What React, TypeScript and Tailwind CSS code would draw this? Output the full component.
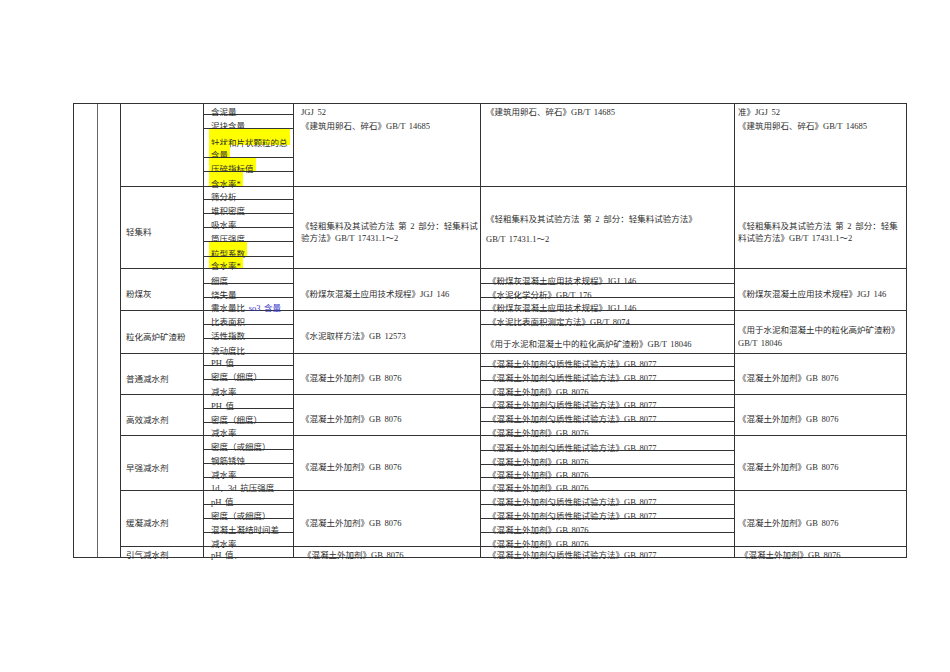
import type { ReactNode } from 'react'
import clsx from 'clsx'

type Sub = { h?: string; t: ReactNode; hl?: boolean; noLine?: boolean; mid?: boolean }
type Block =
  | { kind: 'top'; lines: string[] }
  | { kind: 'mid'; lines: string[] }
  | { kind: 'custom'; cls: string; lines: string[] }
  | { kind: 'rows'; rows: Sub[] }

type Group = { h: string; label: string; c4: Sub[]; c5: Block; c6: Block; c7: Block }

const GB8076 = '《混凝土外加剂》GB 8076'
const GB8077 = '《混凝土外加剂匀质性能试验方法》GB 8077'

const groups: Group[] = [
  {
    h: 'h-[83px]',
    label: '',
    c4: [
      { h: 'h-[11px]', t: '含泥量' },
      { h: 'h-[14px]', t: '泥块含量' },
      { h: 'h-[16px]', t: '针状和片状颗粒的总', hl: true, noLine: true },
      { h: 'h-[13px]', t: '含量', hl: true },
      { h: 'h-[14px]', t: '压碎指标值', hl: true },
      { t: '含水率*', hl: true },
    ],
    c5: { kind: 'top', lines: ['JGJ 52', '《建筑用卵石、碎石》GB/T 14685'] },
    c6: { kind: 'top', lines: ['《建筑用卵石、碎石》GB/T 14685'] },
    c7: { kind: 'top', lines: ['准》JGJ 52', '《建筑用卵石、碎石》GB/T 14685'] },
  },
  {
    h: 'h-[82px]',
    label: '轻集料',
    c4: [
      { h: 'h-[13px]', t: '筛分析' },
      { h: 'h-[14px]', t: '堆积密度' },
      { h: 'h-[14px]', t: '吸水率' },
      { h: 'h-[14px]', t: '筒压强度' },
      { h: 'h-[15px]', t: '粒型系数', hl: true },
      { t: '含水率*', hl: true },
    ],
    c5: { kind: 'mid', lines: ['《轻粗集料及其试验方法 第 2 部分：轻集料试', '验方法》GB/T 17431.1～2'] },
    c6: {
      kind: 'custom',
      cls: 'pt-[22px] leading-[20px]',
      lines: ['《轻粗集料及其试验方法 第 2 部分：轻集料试验方法》', 'GB/T 17431.1～2'],
    },
    c7: { kind: 'mid', lines: ['《轻粗集料及其试验方法 第 2 部分：轻集', '料试验方法》GB/T 17431.1～2'] },
  },
  {
    h: 'h-[42px]',
    label: '粉煤灰',
    c4: [
      { h: 'h-[15px]', t: '细度' },
      { h: 'h-[14px]', t: '烧失量' },
      {
        t: (
          <>
            需水量比 <span className="text-[#3737c8]">so3 含量</span>
          </>
        ),
      },
    ],
    c5: { kind: 'mid', lines: ['《粉煤灰混凝土应用技术规程》JGJ 146'] },
    c6: {
      kind: 'rows',
      rows: [
        { h: 'h-[15px]', t: '《粉煤灰混凝土应用技术规程》JGJ 146' },
        { h: 'h-[14px]', t: '《水泥化学分析》GB/T 176' },
        { t: '《粉煤灰混凝土应用技术规程》JGJ 146' },
      ],
    },
    c7: { kind: 'mid', lines: ['《粉煤灰混凝土应用技术规程》JGJ 146'] },
  },
  {
    h: 'h-[43px]',
    label: '粒化高炉矿渣粉',
    c4: [
      { h: 'h-[14px]', t: '比表面积' },
      { h: 'h-[14px]', t: '活性指数' },
      { t: '流动度比' },
    ],
    c5: { kind: 'mid', lines: ['《水泥取样方法》GB 12573'] },
    c6: {
      kind: 'rows',
      rows: [
        { h: 'h-[14px]', t: '《水泥比表面积测定方法》GB/T 8074' },
        { t: '《用于水泥和混凝土中的粒化高炉矿渣粉》GB/T 18046', mid: true },
      ],
    },
    c7: { kind: 'mid', lines: ['《用于水泥和混凝土中的粒化高炉矿渣粉》', 'GB/T 18046'] },
  },
  {
    h: 'h-[41px]',
    label: '普通减水剂',
    c4: [
      { h: 'h-[12px]', t: 'PH 值' },
      { h: 'h-[14px]', t: '密度（细度）' },
      { t: '减水率' },
    ],
    c5: { kind: 'mid', lines: [GB8076] },
    c6: {
      kind: 'rows',
      rows: [
        { h: 'h-[13px]', t: GB8077 },
        { h: 'h-[14px]', t: GB8077 },
        { t: GB8076 },
      ],
    },
    c7: { kind: 'mid', lines: [GB8076] },
  },
  {
    h: 'h-[41px]',
    label: '高效减水剂',
    c4: [
      { h: 'h-[14px]', t: 'PH 值' },
      { h: 'h-[14px]', t: '密度（细度）' },
      { t: '减水率' },
    ],
    c5: { kind: 'mid', lines: [GB8076] },
    c6: {
      kind: 'rows',
      rows: [
        { h: 'h-[13px]', t: GB8077 },
        { h: 'h-[14px]', t: GB8077 },
        { t: GB8076 },
      ],
    },
    c7: { kind: 'mid', lines: [GB8076] },
  },
  {
    h: 'h-[55px]',
    label: '早强减水剂',
    c4: [
      { h: 'h-[14px]', t: '密度（或细度）' },
      { h: 'h-[14px]', t: '钢筋锈蚀' },
      { h: 'h-[14px]', t: '减水率' },
      { t: '1d、3d 抗压强度' },
    ],
    c5: { kind: 'mid', lines: [GB8076] },
    c6: {
      kind: 'rows',
      rows: [
        { h: 'h-[15px]', t: GB8077 },
        { h: 'h-[14px]', t: GB8076 },
        { h: 'h-[13px]', t: GB8076 },
        { t: GB8076 },
      ],
    },
    c7: { kind: 'mid', lines: [GB8076] },
  },
  {
    h: 'h-[56px]',
    label: '缓凝减水剂',
    c4: [
      { h: 'h-[14px]', t: 'pH 值' },
      { h: 'h-[14px]', t: '密度（或细度）' },
      { h: 'h-[14px]', t: '混凝土凝结时间差' },
      { t: '减水率' },
    ],
    c5: { kind: 'mid', lines: [GB8076] },
    c6: {
      kind: 'rows',
      rows: [
        { h: 'h-[14px]', t: GB8077 },
        { h: 'h-[14px]', t: GB8077 },
        { h: 'h-[14px]', t: GB8076 },
        { t: GB8076 },
      ],
    },
    c7: { kind: 'mid', lines: [GB8076] },
  },
  {
    h: 'h-[10px]',
    label: '引气减水剂',
    c4: [{ t: 'pH 值、' }],
    c5: { kind: 'rows', rows: [{ t: GB8076 }] },
    c6: { kind: 'rows', rows: [{ t: GB8077 }] },
    c7: { kind: 'rows', rows: [{ t: GB8076 }] },
  },
]

function SubRows({ rows, pad }: { rows: Sub[]; pad: string }) {
  return (
    <div className="flex h-full flex-col">
      {rows.map((r, i) => {
        const line = !r.noLine && i < rows.length - 1
        if (r.mid) {
          return (
            <div key={i} className={clsx('flex min-h-0 flex-1 items-center pt-[9px]', pad)}>
              <span className="leading-[14px] whitespace-nowrap">{r.t}</span>
            </div>
          )
        }
        return (
          <div
            key={i}
            className={clsx('flex items-end', r.h ?? 'min-h-0 flex-1', line && 'border-b border-[#333]', pad)}
          >
            {r.hl ? (
              <span className="flex h-full items-end bg-[#ffff00] px-[2px]">
                <span className="-mb-[5px] leading-[14px] whitespace-nowrap">{r.t}</span>
              </span>
            ) : (
              <span className="-mb-[5px] pl-[2px] leading-[14px] whitespace-nowrap">{r.t}</span>
            )}
          </div>
        )
      })}
    </div>
  )
}

function Cell({ b, pad }: { b: Block; pad: string }) {
  if (b.kind === 'rows') return <SubRows rows={b.rows} pad={pad} />
  const lines = b.lines.map((l, i) => (
    <div key={i} className="whitespace-nowrap">
      {l}
    </div>
  ))
  if (b.kind === 'top') return <div className={clsx('pt-[2px] leading-[13.5px]', pad)}>{lines}</div>
  if (b.kind === 'mid')
    return (
      <div className={clsx('flex h-full flex-col justify-center pt-[9px] leading-[12.5px]', pad)}>{lines}</div>
    )
  return <div className={clsx(b.cls, pad)}>{lines}</div>
}

export default function App() {
  return (
    <div className="min-h-[672px] w-[950px] bg-white pt-[103px] pl-[73px] font-['Liberation_Serif','Noto_Sans_CJK_SC',serif] text-[8.5px] text-[#2e2e2e] [word-spacing:1.5px]">
      <div className="flex w-[834px] border border-[#333]">
        <div className="w-[24px] border-r border-[#666]" />
        <div className="w-[23px] border-r border-[#333]" />
        <div className="flex w-[785px] flex-col">
          {groups.map((g, gi) => {
            const last = gi === groups.length - 1
            return (
              <div key={gi} className={clsx('flex', g.h, !last && 'border-b border-[#333]')}>
                <div
                  className={clsx(
                    'flex w-[83px] border-r border-[#333] pl-[5px]',
                    last ? 'items-end' : 'items-center pt-[9px]',
                  )}
                >
                  <span className={clsx('leading-[14px] whitespace-nowrap', last && '-mb-[5px]')}>{g.label}</span>
                </div>
                <div className="w-[90px] border-r border-[#333]">
                  <SubRows rows={g.c4} pad="pl-[5px]" />
                </div>
                <div className="w-[187px] border-r border-[#333]">
                  <Cell b={g.c5} pad="pl-[7px]" />
                </div>
                <div className="w-[254px] border-r border-[#333]">
                  <Cell b={g.c6} pad="pl-[5px]" />
                </div>
                <div className="w-[171px]">
                  <Cell b={g.c7} pad="pl-[3px]" />
                </div>
              </div>
            )
          })}
        </div>
      </div>
    </div>
  )
}
